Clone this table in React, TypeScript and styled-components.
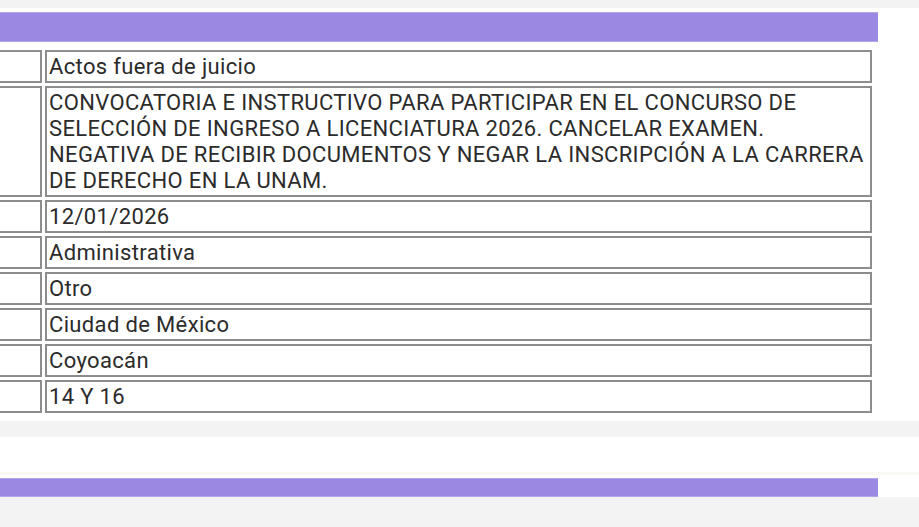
import React from "react";
import styled, { createGlobalStyle } from "styled-components";

const Global = createGlobalStyle`
  html, body { margin: 0; padding: 0; background: #ffffff; }
  body { font-family: Roboto, "Noto Sans", Arial, sans-serif; overflow: hidden; }
`;

const Page = styled.div`
  width: 919px;
  height: 527px;
  overflow: hidden;
  display: flex;
  flex-direction: column;
`;

const GrayStrip = styled.div<{ $h: number }>`
  height: ${(p) => p.$h}px;
  background: #f3f3f3;
  flex: none;
`;

const Spacer = styled.div<{ $h: number; $bg?: string }>`
  height: ${(p) => p.$h}px;
  background: ${(p) => p.$bg || "#ffffff"};
  flex: none;
`;

const PurpleBar = styled.div<{ $h: number }>`
  width: 878px;
  height: ${(p) => p.$h}px;
  box-sizing: border-box;
  background: #9b88e2;
  border-top: 1px solid #b3a5ea;
  border-bottom: 1px solid #b3a5ea;
  flex: none;
`;

const TableWrap = styled.div`
  width: 919px;
  overflow: hidden;
  flex: none;
`;

const Table = styled.table`
  margin-left: -50px;
  width: 926px;
  table-layout: fixed;
  border-collapse: separate;
  border-spacing: 3px;
  border: 1px solid #ffffff;
`;

const LabelCell = styled.td`
  width: 88px;
  box-sizing: border-box;
  border: 2px solid #8d8d8d;
  background: #ffffff;
  padding: 0;
`;

const ValueCell = styled.td`
  box-sizing: border-box;
  border: 2px solid #8d8d8d;
  background: #ffffff;
  padding: 2px 2px 1px 2px;
  font-size: 22px;
  line-height: 26px;
  color: #2b2b2b;
  vertical-align: top;
  letter-spacing: 0.35px;
`;

const FaintLine = styled.div`
  height: 3px;
  background: #f9f8f1;
  flex: none;
`;

const Bottom = styled.div`
  flex: 1;
  background: #f3f3f3;
`;

const rows = [
  "Actos fuera de juicio",
  "CONVOCATORIA E INSTRUCTIVO PARA PARTICIPAR EN EL CONCURSO DE SELECCIÓN DE INGRESO A LICENCIATURA 2026. CANCELAR EXAMEN. NEGATIVA DE RECIBIR DOCUMENTOS Y NEGAR LA INSCRIPCIÓN A LA CARRERA DE DERECHO EN LA UNAM.",
  "12/01/2026",
  "Administrativa",
  "Otro",
  "Ciudad de México",
  "Coyoacán",
  "14 Y 16",
];

export default function App() {
  return (
    <>
      <Global />
      <Page>
        <GrayStrip $h={8} />
        <Spacer $h={4} />
        <PurpleBar $h={30} />
        <Spacer $h={4} />
        <TableWrap>
          <Table>
            <tbody>
              {rows.map((r, i) => (
                <tr key={i}>
                  <LabelCell />
                  <ValueCell>{r}</ValueCell>
                </tr>
              ))}
            </tbody>
          </Table>
        </TableWrap>
        <Spacer $h={4} />
        <GrayStrip $h={16} />
        <Spacer $h={35} />
        <FaintLine />
        <Spacer $h={3} />
        <PurpleBar $h={19} />
        <Bottom />
      </Page>
    </>
  );
}
